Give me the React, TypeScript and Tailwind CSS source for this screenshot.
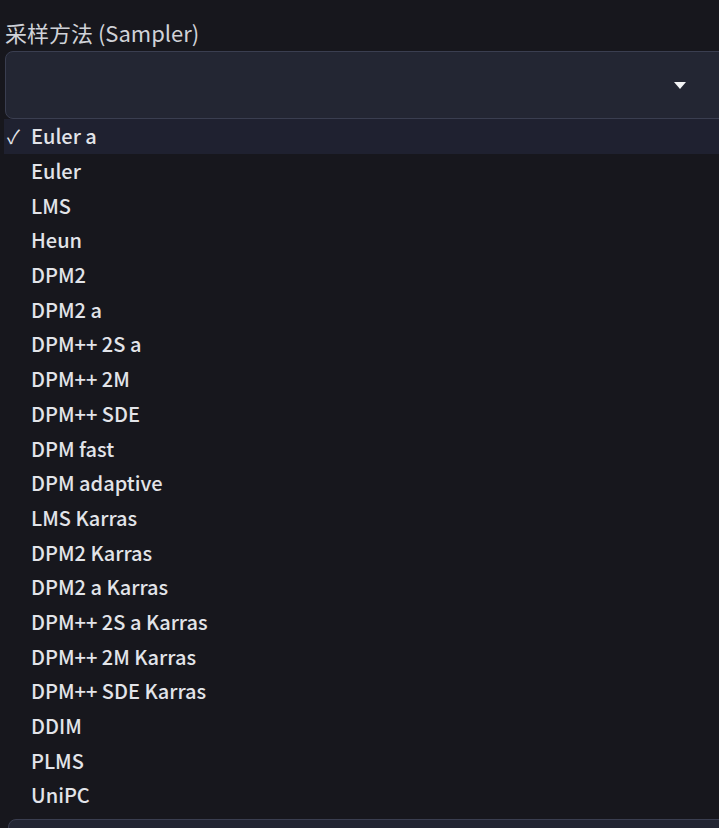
const samplers = [
  "Euler a",
  "Euler",
  "LMS",
  "Heun",
  "DPM2",
  "DPM2 a",
  "DPM++ 2S a",
  "DPM++ 2M",
  "DPM++ SDE",
  "DPM fast",
  "DPM adaptive",
  "LMS Karras",
  "DPM2 Karras",
  "DPM2 a Karras",
  "DPM++ 2S a Karras",
  "DPM++ 2M Karras",
  "DPM++ SDE Karras",
  "DDIM",
  "PLMS",
  "UniPC",
]

export default function App() {
  const selected = "Euler a"

  return (
    <div
      className="h-[828px] overflow-hidden bg-[#17171d] text-[#e2e4e9]"
      style={{ fontFamily: "'Noto Sans CJK SC', sans-serif" }}
    >
      {/* Label */}
      <div className="pl-[5px] pt-[18px] h-[51px] text-[22px] leading-[28px] text-[#d0d2d8]">
        采样方法 (Sampler)
      </div>

      {/* Select box */}
      <div className="ml-[5px] -mr-[12px] h-[68px] rounded-lg border border-[#3a3e50] bg-[#232633] flex items-center justify-end pr-[44px]">
        <svg width="12" height="7" viewBox="0 0 12 7" className="mt-[1px]">
          <path d="M0 0 L12 0 L6 7 Z" fill="#f3f4f6" />
        </svg>
      </div>

      {/* Options list */}
      <ul className="ml-[4px] bg-[#17171d]">
        {samplers.map((s) => (
          <li
            key={s}
            className={`h-[34.7px] flex items-center text-[20px] font-medium ${
              s === selected ? "bg-[#1f2130]" : ""
            }`}
          >
            <span className="w-[27px] pl-[3px] text-[19px] font-normal">{s === selected ? "✓" : ""}</span>
            <span>{s}</span>
          </li>
        ))}
      </ul>

      {/* Next control peeking in */}
      <div className="mt-[6px] ml-[8px] -mr-[12px] h-[40px] rounded-lg border border-[#3a3e50] bg-[#232633]" />
    </div>
  )
}
